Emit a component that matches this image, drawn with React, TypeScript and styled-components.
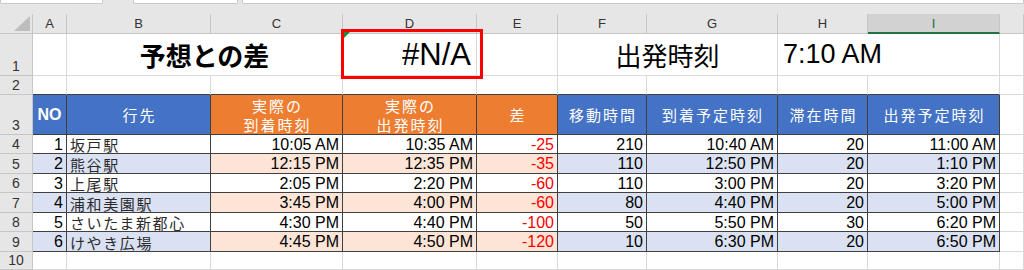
import React from "react";
import styled, { createGlobalStyle } from "styled-components";

const GRID = "#DADADA";
const EDGE = "#404040";
const HEAD_LINE = "#C6C6C6";
const BLUE = "#4472C4";
const ORANGE = "#ED7D31";
const BLUE_LIGHT = "#D9E1F2";
const ORANGE_LIGHT = "#FCE4D6";
const JP = `"Noto Sans CJK JP", "Noto Sans", sans-serif`;
const LATIN = `"Liberation Sans", Arial, sans-serif`;

type Tone = "blue" | "orange";

const COLUMNS = ["A", "B", "C", "D", "E", "F", "G", "H", "I", ""];
const TONES: Tone[] = ["blue", "blue", "orange", "orange", "orange", "blue", "blue", "blue", "blue"];

const HEADERS: { text: string[]; bold?: boolean }[] = [
    { text: ["NO"], bold: true },
    { text: ["行先"] },
    { text: ["実際の", "到着時刻"] },
    { text: ["実際の", "出発時刻"] },
    { text: ["差"] },
    { text: ["移動時間"] },
    { text: ["到着予定時刻"] },
    { text: ["滞在時間"] },
    { text: ["出発予定時刻"] },
];

const ROWS: (string | number)[][] = [
    [1, "坂戸駅", "10:05 AM", "10:35 AM", -25, 210, "10:40 AM", 20, "11:00 AM"],
    [2, "熊谷駅", "12:15 PM", "12:35 PM", -35, 110, "12:50 PM", 20, "1:10 PM"],
    [3, "上尾駅", "2:05 PM", "2:20 PM", -60, 110, "3:00 PM", 20, "3:20 PM"],
    [4, "浦和美園駅", "3:45 PM", "4:00 PM", -60, 80, "4:40 PM", 20, "5:00 PM"],
    [5, "さいたま新都心", "4:30 PM", "4:40 PM", -100, 50, "5:50 PM", 30, "6:20 PM"],
    [6, "けやき広場", "4:45 PM", "4:50 PM", -120, 10, "6:30 PM", 20, "6:50 PM"],
];

const GlobalStyle = createGlobalStyle`
    html, body {
        margin: 0;
        padding: 0;
        background: #E6E6E6;
        overflow: hidden;
    }
`;

const Page = styled.div`
    width: 1024px;
    height: 270px;
    overflow: hidden;
    background: #E6E6E6;
    display: flex;
    flex-direction: column;
`;

const TopStrip = styled.div`
    height: 14px;
    flex: none;
    display: flex;
    gap: 30px;
    align-items: flex-start;
    box-sizing: border-box;
`;

const Field = styled.div<{ $width?: number }>`
    height: 4px;
    width: ${(p) => (p.$width ? `${p.$width}px` : "auto")};
    flex: ${(p) => (p.$width ? "none" : "1")};
    background: #fff;
    border: 1px solid #C8C8C8;
    border-top: none;
    box-sizing: border-box;
    border-radius: 0 0 2px 2px;

    & + & + & {
        margin-left: -26px;
    }
`;

const Sheet = styled.div`
    display: grid;
    grid-template-columns: 33px 34px 144px 132px 134px 81px 89px 131px 90px 132px 1fr;
    grid-template-rows: 20px 42px 19px 40px 19px 20px 19px 20px 19px 20px 1fr;
    flex: 1;
    background: #fff;
`;

const Corner = styled.div`
    background: #E6E6E6;
    border-right: 1px solid ${HEAD_LINE};
    border-bottom: 1px solid ${HEAD_LINE};
    box-sizing: border-box;
    display: flex;
    justify-content: flex-end;
    align-items: flex-end;
    padding: 0 2px 2px 0;
`;

const CornerMark = styled.span`
    width: 16px;
    height: 15px;
    background: #BDBDBD;
    clip-path: polygon(100% 0, 100% 100%, 0 100%);
`;

const ColHeader = styled.div<{ $selected?: boolean }>`
    background: ${(p) => (p.$selected ? "#D2D2D2" : "#E6E6E6")};
    border-right: 1px solid ${HEAD_LINE};
    border-bottom: ${(p) => (p.$selected ? "2px solid #217346" : `1px solid ${HEAD_LINE}`)};
    box-sizing: border-box;
    display: flex;
    align-items: center;
    justify-content: center;
    font: 13px ${LATIN};
    color: ${(p) => (p.$selected ? "#1E6B41" : "#333")};
`;

const RowHeader = styled.div`
    background: #E6E6E6;
    border-right: 1px solid ${HEAD_LINE};
    border-bottom: 1px solid ${HEAD_LINE};
    box-sizing: border-box;
    display: flex;
    align-items: flex-end;
    justify-content: center;
    padding-bottom: 1px;
    font: 14px ${LATIN};
    color: #333;
`;

const Blank = styled.div<{ $span?: number; $tableTop?: boolean }>`
    grid-column: span ${(p) => p.$span ?? 1};
    border-right: 1px solid ${GRID};
    border-bottom: 1px solid ${(p) => (p.$tableTop ? EDGE : GRID)};
    box-sizing: border-box;
    background: #fff;
`;

const TitleCell = styled(Blank)<{ $align: "left" | "center" | "right" }>`
    position: relative;
    display: flex;
    align-items: center;
    justify-content: ${(p) =>
        p.$align === "left" ? "flex-start" : p.$align === "right" ? "flex-end" : "center"};
    padding: 0 5px 0 5px;
    color: #000;
    white-space: nowrap;
`;

const TitleJp = styled.span<{ $bold?: boolean }>`
    font-family: ${JP};
    font-weight: ${(p) => (p.$bold ? 700 : 400)};
    font-size: 26px;
`;

const TitleValue = styled.span<{ $size: number }>`
    font-family: ${LATIN};
    font-size: ${(p) => p.$size}px;
`;

const Highlight = styled.div`
    position: absolute;
    left: -2px;
    top: -5px;
    width: 142px;
    height: 50px;
    border: 3px solid #FF0000;
    box-sizing: border-box;
    z-index: 2;
    pointer-events: none;
`;

const ErrorFlag = styled.span`
    position: absolute;
    left: 1px;
    top: -2px;
    width: 6px;
    height: 6px;
    background: #1E8A3A;
    clip-path: polygon(0 0, 100% 0, 0 100%);
    z-index: 3;
`;

const HeadCell = styled.div<{ $tone: Tone; $bold?: boolean }>`
    background: ${(p) => (p.$tone === "blue" ? BLUE : ORANGE)};
    border-right: 1px solid ${EDGE};
    border-bottom: 1px solid ${EDGE};
    box-sizing: border-box;
    display: flex;
    flex-direction: column;
    align-items: center;
    justify-content: center;
    color: #fff;
    font-family: ${(p) => (p.$bold ? LATIN : JP)};
    font-weight: ${(p) => (p.$bold ? 700 : 400)};
    font-size: ${(p) => (p.$bold ? "16px" : "15px")};
    letter-spacing: ${(p) => (p.$bold ? "0" : "2px")};
    line-height: 19px;
    padding-left: ${(p) => (p.$bold ? "0" : "2px")};
    white-space: nowrap;
`;

const DataCell = styled.div<{ $fill: string; $align: "left" | "right"; $negative?: boolean; $jp?: boolean }>`
    background: ${(p) => p.$fill};
    border-right: 1px solid ${EDGE};
    border-bottom: 1px solid ${EDGE};
    box-sizing: border-box;
    display: flex;
    align-items: center;
    justify-content: ${(p) => (p.$align === "left" ? "flex-start" : "flex-end")};
    padding: 1px 3px 0 3px;
    font-family: ${(p) => (p.$jp ? JP : LATIN)};
    font-size: ${(p) => (p.$jp ? "15px" : "16px")};
    letter-spacing: ${(p) => (p.$jp ? "1.6px" : "0")};
    color: ${(p) => (p.$negative ? "#FF0000" : p.$jp ? "#2A2A2A" : "#000")};
    white-space: nowrap;
    overflow: hidden;
`;

const fillFor = (col: number, striped: boolean) => {
    if (!striped) return "#fff";
    return TONES[col] === "orange" ? ORANGE_LIGHT : BLUE_LIGHT;
};

export default function App() {
    return (
        <Page>
            <GlobalStyle />
            <TopStrip>
                <Field $width={103} />
                <Field $width={105} />
                <Field />
            </TopStrip>
            <Sheet>
                <Corner>
                    <CornerMark />
                </Corner>
                {COLUMNS.map((c, i) => (
                    <ColHeader key={i} $selected={c === "I"}>
                        {c}
                    </ColHeader>
                ))}

                <RowHeader>1</RowHeader>
                <Blank />
                <TitleCell $span={2} $align="center">
                    <TitleJp $bold>予想との差</TitleJp>
                </TitleCell>
                <TitleCell $align="right">
                    <Highlight />
                    <ErrorFlag />
                    <TitleValue $size={31}>#N/A</TitleValue>
                </TitleCell>
                <Blank />
                <TitleCell $span={2} $align="center">
                    <TitleJp>出発時刻</TitleJp>
                </TitleCell>
                <TitleCell $span={2} $align="left">
                    <TitleValue $size={27}>7:10 AM</TitleValue>
                </TitleCell>
                <Blank />

                <RowHeader>2</RowHeader>
                {TONES.map((_, i) => (
                    <Blank key={i} $tableTop />
                ))}
                <Blank />

                <RowHeader>3</RowHeader>
                {HEADERS.map((h, i) => (
                    <HeadCell key={i} $tone={TONES[i]} $bold={h.bold}>
                        {h.text.map((line) => (
                            <span key={line}>{line}</span>
                        ))}
                    </HeadCell>
                ))}
                <Blank />

                {ROWS.map((row, r) => (
                    <React.Fragment key={r}>
                        <RowHeader>{r + 4}</RowHeader>
                        {row.map((value, c) => (
                            <DataCell
                                key={c}
                                $fill={fillFor(c, r % 2 === 1)}
                                $align={c === 1 ? "left" : "right"}
                                $jp={c === 1}
                                $negative={typeof value === "number" && value < 0}
                            >
                                {value}
                            </DataCell>
                        ))}
                        <Blank />
                    </React.Fragment>
                ))}

                <RowHeader>10</RowHeader>
                {COLUMNS.map((_, i) => (
                    <Blank key={i} />
                ))}
            </Sheet>
        </Page>
    );
}
